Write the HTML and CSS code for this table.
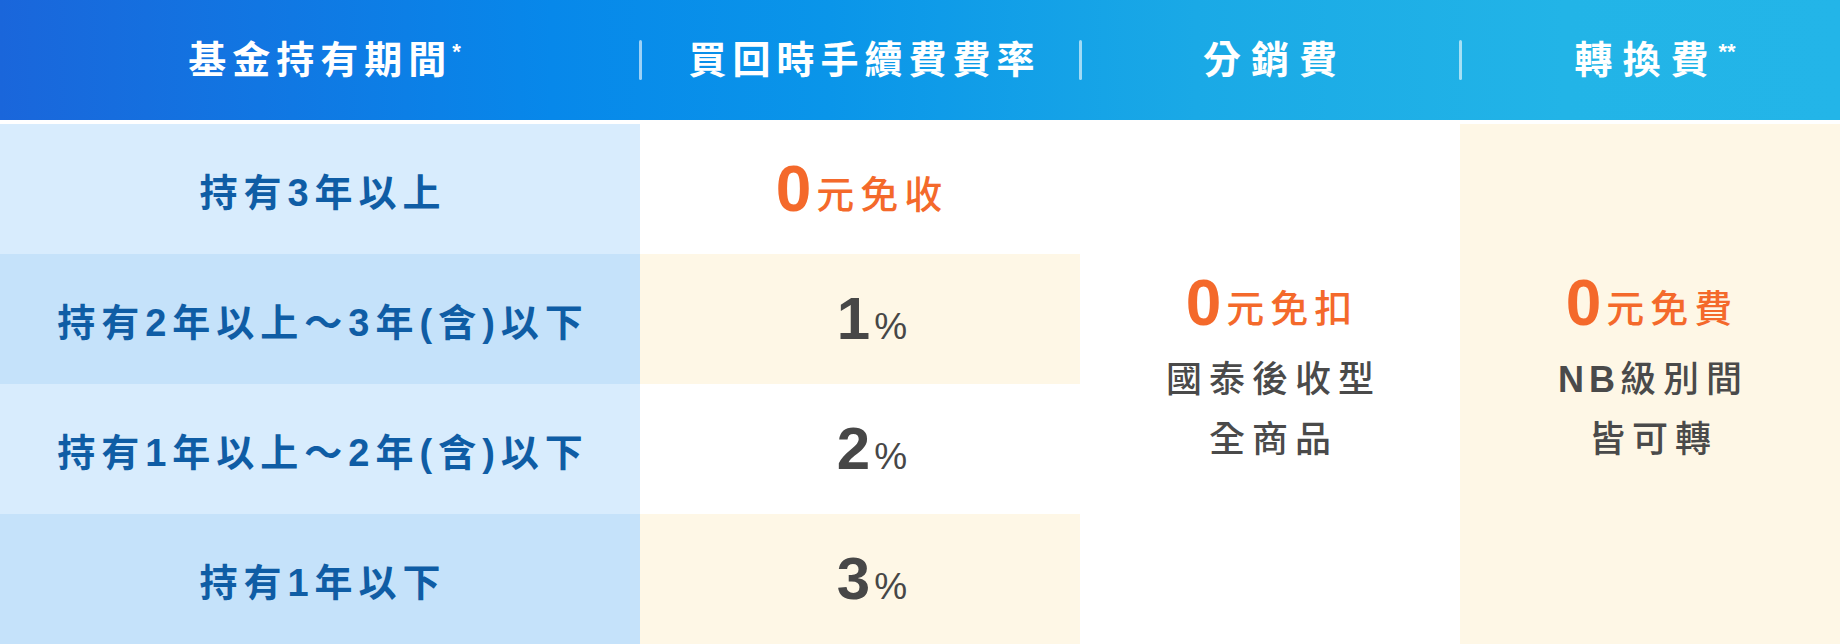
FILE: index.html
```html
<!DOCTYPE html>
<html lang="zh-Hant">
<head>
<meta charset="utf-8">
<title>基金費用</title>
<link rel="stylesheet" href="styles.css">
</head>
<body>
<div class="fee-table">
  <div class="head">
    <div class="hcell w1"><span class="htext">基金持有期間<span class="star">*</span></span></div>
    <div class="divider"></div>
    <div class="hcell w2"><span class="htext">買回時手續費費率</span></div>
    <div class="divider"></div>
    <div class="hcell w3"><span class="htext wide">分銷費</span></div>
    <div class="divider"></div>
    <div class="hcell w4"><span class="htext wide">轉換費<span class="star">**</span></span></div>
  </div>
  <div class="grid">
    <div class="period light">持有3年以上</div>
    <div class="rate"><div class="free"><span class="zero">0</span><span class="unit">元免收</span></div></div>
    <div class="merged c3">
      <div class="free"><span class="zero">0</span><span class="unit">元免扣</span></div>
      <div class="desc">國泰後收型<br>全商品</div>
    </div>
    <div class="merged c4">
      <div class="free"><span class="zero">0</span><span class="unit">元免費</span></div>
      <div class="desc"><span class="latin">NB</span>級別間<br>皆可轉</div>
    </div>
    <div class="period dark">持有2年以上～3年(含)以下</div>
    <div class="rate cream"><div class="pct"><span class="num">1</span><span class="pc">%</span></div></div>
    <div class="period light">持有1年以上～2年(含)以下</div>
    <div class="rate"><div class="pct"><span class="num">2</span><span class="pc">%</span></div></div>
    <div class="period dark">持有1年以下</div>
    <div class="rate cream"><div class="pct"><span class="num">3</span><span class="pc">%</span></div></div>
  </div>
</div>
</body>
</html>
```
FILE: styles.css
```css
* { box-sizing: border-box; }
html, body { margin: 0; padding: 0; }
body {
  width: 1840px;
  height: 644px;
  overflow: hidden;
  background: #ffffff;
  font-family: "Liberation Sans", "Noto Sans CJK TC", sans-serif;
}
.fee-table { width: 1840px; }

/* header */
.head {
  display: flex;
  align-items: center;
  height: 120px;
  color: #ffffff;
  background: linear-gradient(90deg, #1a66db 0%, #0788ea 30%, #0a95e9 45%, #1aa9e6 65%, #22b4e7 85%, #23b5e8 100%);
}
.hcell {
  display: flex;
  align-items: center;
  justify-content: center;
  height: 100%;
}
.w1 { flex: 0 0 640px; }
.w2 { flex: 0 0 440px; }
.w3, .w4 { flex: 0 0 380px; }
.divider {
  flex: 0 0 3px;
  height: 40px;
  margin: 0 -1.5px;
  border-radius: 2px;
  background: rgba(255, 255, 255, 0.6);
}
.htext {
  font-size: 38px;
  font-weight: 700;
  line-height: 1;
  letter-spacing: 6px;
  padding-left: 9px;
  white-space: nowrap;
}
.htext.wide { letter-spacing: 10px; padding-left: 10px; }
.star {
  font-size: 22px;
  font-weight: 700;
  letter-spacing: 0;
  line-height: 1;
  vertical-align: top;
}

/* body grid */
.grid {
  display: grid;
  grid-template-columns: 640px 440px 380px 380px;
  grid-template-rows: repeat(4, 130px);
  margin-top: 4px;
}
.period {
  grid-column: 1;
  display: flex;
  align-items: center;
  justify-content: center;
  color: #0f5da5;
  font-size: 38px;
  font-weight: 700;
  letter-spacing: 6px;
  padding-left: 6px;
  white-space: nowrap;
}
.period.light { background: #d8ecfd; }
.period.dark { background: #c5e2fa; }

.rate {
  grid-column: 2;
  display: flex;
  align-items: center;
  justify-content: center;
  background: #ffffff;
}
.rate.cream { background: #fef7e6; }

.merged {
  grid-row: 1 / span 4;
  display: flex;
  flex-direction: column;
  align-items: center;
  justify-content: center;
  padding-bottom: 27px;
}
.c3 { grid-column: 3; background: #ffffff; }
.c4 { grid-column: 4; background: #fef7e6; }

.free {
  color: #f4692b;
  white-space: nowrap;
  line-height: 1;
  padding-left: 4px;
}
.zero { font-size: 64px; font-weight: 700; }
.unit {
  font-size: 38px;
  font-weight: 500;
  letter-spacing: 6px;
  margin-left: 5px;
  vertical-align: 3px;
}

.pct {
  color: #474747;
  white-space: nowrap;
  line-height: 1;
  padding-left: 24px;
}
.num { font-size: 60px; font-weight: 700; }
.pc { font-size: 37px; margin-left: 4px; }

.desc {
  margin-top: 15px;
  color: #4a4a4a;
  font-size: 36px;
  font-weight: 500;
  letter-spacing: 7px;
  padding-left: 7px;
  line-height: 60px;
  text-align: center;
  white-space: nowrap;
}
.latin { font-weight: 700; letter-spacing: 5px; }
```
